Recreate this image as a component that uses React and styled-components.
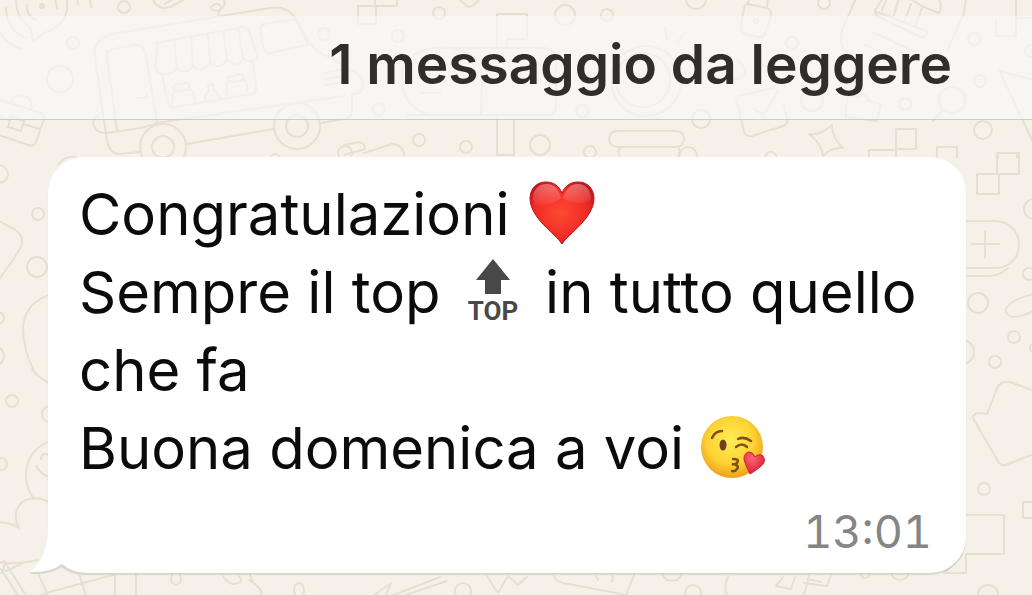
import React from "react";
import styled, { createGlobalStyle } from "styled-components";

const GlobalStyle = createGlobalStyle`
  * { box-sizing: border-box; }
  body {
    margin: 0;
    background: #f5f1e9;
    font-family: Inter, "Liberation Sans", sans-serif;
  }
`;

const Screen = styled.div`
  position: relative;
  min-height: 100vh;
  padding-top: 16px;
  overflow: hidden;
`;

const WallpaperArt = styled.svg`
  position: absolute;
  inset: 0;
  width: 100%;
  height: 100%;
  fill: none;
  stroke: #e8dfd4;
  stroke-width: 2;
  stroke-linejoin: round;
  stroke-linecap: round;
`;

const Header = styled.header`
  position: relative;
  padding: 16px 80px 23px;
  border-bottom: 1px solid #cfccc7;
  background: rgba(249, 249, 247, 0.64);
  text-align: right;
`;

const Title = styled.h1`
  margin: 0;
  font-size: 55px;
  line-height: 64px;
  font-weight: 600;
  color: #2f2e2d;
`;

const Conversation = styled.main`
  position: relative;
  padding: 37px 66px 22px 48px;
`;

const Bubble = styled.article`
  position: relative;
  padding: 18px 34px 11px 31px;
  border-radius: 36px;
  background: #fff;
  box-shadow: 0 2px 1px rgba(120, 115, 95, 0.2);
`;

const Tail = styled.svg`
  position: absolute;
  left: -18px;
  bottom: -2px;
  width: 68px;
  height: 72px;
`;

const Message = styled.p`
  position: relative;
  margin: 0;
  font-size: 58px;
  line-height: 78px;
  color: #0b0b0b;
`;

const Time = styled.time`
  display: block;
  margin-top: 15px;
  font-size: 45px;
  line-height: 60px;
  font-variant-numeric: tabular-nums;
  text-align: right;
  color: #858585;
`;

const EmojiArt = styled.svg`
  width: 72px;
  height: 66px;
  overflow: visible;
  vertical-align: -11px;
`;

const ringSpots = [
  [124, 7, 6], [73, 43, 6], [60, 79, 13], [439, 13, 6], [398, 36, 6], [565, 15, 10], [607, 15, 6],
  [379, 109, 6], [582, 111, 6], [419, 140, 6], [466, 147, 6], [540, 145, 10], [590, 152, 6],
  [792, 43, 6], [824, 3, 6], [974, 39, 6], [980, 81, 6], [701, 119, 9], [812, 100, 11], [905, 104, 6],
  [983, 130, 9], [688, 156, 9], [771, 158, 6], [345, 153, 7], [324, 34, 6], [696, -1, 10], [275, 159, 5],
  [38, 214, 6], [37, 267, 10], [-1, 174, 9], [-2, 318, 6], [-6, 356, 10], [12, 401, 6], [50, 414, 8],
  [1, 464, 6], [978, 303, 10], [1014, 337, 6], [995, 362, 6], [962, 352, 12], [1029, 274, 6],
  [1034, 209, 10], [984, 489, 6], [988, 595, 10], [1031, 51, 6], [1034, 348, 4],
];

const smallOvals = [
  [176, 578, 5, 7], [299, 590, 5, 7], [463, 591, 8, 8], [672, 571, 10, 10], [693, 593, 8, 8],
  [865, 572, 5, 6], [900, 571, 9, 9],
];

function Wallpaper() {
  return (
    <WallpaperArt viewBox="0 0 1032 595" preserveAspectRatio="xMinYMin slice" aria-hidden="true">
      {ringSpots.map(([x, y, r]) => (
        <circle key={`${x},${y}`} cx={x} cy={y} r={r} />
      ))}
      {smallOvals.map(([x, y, rx, ry]) => (
        <ellipse key={`${x},${y}`} cx={x} cy={y} rx={rx} ry={ry} />
      ))}

      {/* speech balloon with sound waves */}
      <path d="M17 -4C14 9 20 21 30 27L33 41L44 33C59 29 69 17 67 1M6 8C6 23 14 33 26 38M-2 28C3 40 11 46 22 49M27 5C26 12 30 18 36 20M55 -2L57 8M77 -2L78 4M90 -2L91 7" />
      <circle cx="42" cy="6" r="2" fill="#e9dfd3" />
      <path d="M153 -2C154 6 162 10 170 7L187 -2M165 4L176 -3M218 15L220 10C215 12 209 10 212 6C216 2 224 5 220 10C225 7 226 2 223 -2" />

      {/* food truck */}
      <path d="M140 152L119 154Q110 154 107 141L95 58Q92 40 112 34L270 8Q287 5 297 20L309 42Q318 55 330 57L346 68M108 133L140 128M140 128L156 124M155 123L344 96M187 144L274 129M320 123L344 119M106 51L117 131M107 58Q106 50 115 49L133 45Q144 43 146 56L157 123M137 98L143 98Q147 98 147 94" />
      <path d="M156 43L243 27Q247 27 249 31L257 54Q259 60 252 61Q246 62 243 58Q241 65 235 64Q229 62 227 59Q223 67 217 66Q211 65 210 62Q207 69 200 69Q195 69 193 66Q188 73 182 71Q178 70 177 68Q172 75 166 74Q156 75 155 66L158 44M174 40L177 68M191 37L193 66M208 34L210 62M223 31L227 59M238 28L243 58M162 75L168 104Q169 108 175 107L252 94Q257 92 256 87L253 62" />
      <path d="M172 106L173 94Q175 90 181 91L189 89Q193 89 194 95L195 103M176 91L173 87Q174 84 179 84L186 83Q190 83 189 89M206 100Q203 95 209 91L208 85L213 84L214 90Q219 93 219 98M227 96L226 84Q228 80 234 82L244 80Q248 80 247 92M229 81L228 77L242 74L244 80M262 24L295 19L308 45L269 53Q264 53 263 47L260 28Q260 25 266 24M324 73L343 69M325 79L343 76M326 85L344 82M98 116Q92 119 94 126Q97 134 108 133" />
      <circle cx="163" cy="147" r="23" />
      <circle cx="163" cy="147" r="11" />
      <circle cx="297" cy="126" r="23" />
      <circle cx="297" cy="126" r="11" />

      {/* briefcase */}
      <path d="M-4 99L39 112Q45 114 44 119L36 142Q34 147 28 145L-4 134M11 102C12 93 27 93 31 102L32 110M-3 116L9 120M23 124L40 129M11 117L24 121L21 131L8 127Z" />

      {/* mailbox */}
      <path d="M497 47L497 14L527 14L527 39L507 39L507 47M445 48L544 48Q556 49 556 62L556 106Q556 115 547 115L407 115M481 114L482 76C481 38 402 38 402 76C402 103 415 114 438 115M422 93L441 93M497 118L497 155L514 155L514 118M358 24V6H376V24ZM375 6V-3H397V6H358M458 -2L468 7Q471 8 480 -1M344 70C360 69 367 82 360 93L353 94M352 94V112Q351 118 344 119" />
      <path d="M344 145L359 142Q365 143 365 149L344 155M364 153L392 144Q404 145 404 156" />

      {/* camera lens */}
      <circle cx="646" cy="81" r="35" />
      <circle cx="643" cy="80" r="27" />
      <path d="M665 27L667 39M684 33L678 42M617 131H677Q684 132 684 139Q683 147 676 147H617Q609 146 609 139Q610 131 617 131M621 147Q616 153 620 157M678 147Q681 152 678 157" />

      {/* padlock, tick box, star, glass and pins */}
      <path d="M747 4L767 8Q772 10 771 16L765 34Q763 38 758 37L745 34Q740 32 741 26L744 8Q745 4 749 4M748 3L750 -3M767 7L768 -2M738 96L773 88L780 80M736 98L744 132Q746 137 752 136L783 126Q788 124 787 119L784 105M754 109L764 115L777 92M809 134Q820 136 832 125Q832 138 843 148Q831 147 823 156Q822 144 809 134M848 96Q858 98 862 95Q868 95 868 101L881 104L877 121L846 117Q845 108 848 96M943 110L933 121M732 80Q747 79 745 69L738 60" />
      <circle cx="756" cy="21" r="2" />
      <circle cx="952" cy="100" r="13" />
      <path d="M856 -2L843 28Q838 42 845 51M966 -2L964 13L948 49M884 -3L875 10Q875 16 881 18L923 38L928 32L875 11M887 -2L882 10M899 -2L893 18M911 4L904 23M922 8L915 27M910 -2C918 6 932 10 939 13Q943 5 938 -3M872 32L916 52M865 45L892 57M996 20V36H1016V18M1016 -3V18H1034M999 71L1034 80M1000 72L1032 140" />
      <path d="M896 129H916V149H896ZM869 158V150H896M896 149V158M937 158V147H957V158M998 158V153H1017V158M997 153H1019V174H997ZM977 174H999V194H977Z" />

      {/* right-hand game pad, leaf and notes */}
      <path d="M967 221H994C1010 221 1019 232 1019 245C1019 258 1009 268 995 268H966M1008 268Q1000 276 988 276H966M985 231V258M972 244H999M1034 294C1012 299 1001 308 1008 315Q1014 320 1034 311M1034 391L1013 383Q1002 379 997 388L987 414L978 413Q971 415 974 420L999 463Q1002 467 1008 464L1034 454M966 515H1004V554H966M1034 502H1023V518H1034M966 554V573H944L962 555" />

      {/* left-hand doodles */}
      <path d="M59 164Q65 155 76 157M-3 220L14 229Q25 236 21 247L13 260L-3 282M52 294Q25 302 23 327Q23 350 34 371M32 370Q41 380 52 384M52 441C27 447 18 477 34 499M41 459Q41 451 51 456M36 466Q43 477 51 477M-4 523C2 522 11 523 19 528C11 512 19 499 34 498Q43 498 50 503M-4 561Q10 566 38 560M4 561L29 600M1 569L21 600M6 571L23 563M38 573L49 598M79 574L87 598M42 594L113 575M115 575V598M136 575V598M4 563Q5 574 -3 574" />

      {/* doodles along the lower edge */}
      <path d="M222 575Q232 590 242 580L238 575M250 575L253 583M249 580Q264 588 262 600M370 598L391 583L385 597M388 597L440 577M400 597L447 581M486 575L498 593L508 576L518 585L527 577M554 576Q556 583 569 584L626 595L634 575M596 576L598 580M613 576L612 582M728 576Q722 590 729 600M783 577L776 586L791 589L795 577M809 576L803 600M804 583L827 586L831 575M807 579L821 582" />
    </WallpaperArt>
  );
}

function Heart() {
  return (
    <EmojiArt viewBox="0 0 72 66" role="img" aria-label="cuore rosso">
      <defs>
        <radialGradient id="heartFill" cx=".48" cy=".5" r=".65">
          <stop offset="0" stopColor="#ff4934" />
          <stop offset=".62" stopColor="#f02b25" />
          <stop offset="1" stopColor="#b80e16" />
        </radialGradient>
        <linearGradient id="heartShine" x2="0" y2="1">
          <stop offset="0" stopColor="#fff" stopOpacity=".35" />
          <stop offset="1" stopColor="#fff" stopOpacity="0" />
        </linearGradient>
      </defs>
      <path d="M36 64C29 53 5 39 4 19C4 8 11 2 20 2C28 2 33 6 36 13C39 6 44 2 52 2C61 2 68 8 68 19C67 39 43 53 36 64Z" fill="url(#heartFill)" stroke="#b9141a" />
      <path d="M7 19C7 8 14 4 21 4C28 4 33 9 35 18C29 24 15 26 8 27ZM37 18C40 8 46 4 52 4C59 4 65 9 65 20C57 25 44 24 37 18Z" fill="url(#heartShine)" />
    </EmojiArt>
  );
}

const TopWord = styled.text`
  font-family: Roboto, sans-serif;
  font-size: 26px;
  font-weight: 700;
  text-anchor: middle;
  fill: #484848;
`;

function TopArrow() {
  return (
    <EmojiArt viewBox="0 0 72 66" role="img" aria-label="top">
      <path d="M36 1L53 22H44V36H28V22H19Z" fill="#484848" />
      <TopWord x="36" y="62">TOP</TopWord>
    </EmojiArt>
  );
}

function Kiss() {
  return (
    <EmojiArt viewBox="0 0 72 66" role="img" aria-label="faccina che manda un bacio">
      <defs>
        <radialGradient id="face" cx=".48" cy=".4" r=".6">
          <stop offset="0" stopColor="#ffed58" />
          <stop offset=".62" stopColor="#fed334" />
          <stop offset="1" stopColor="#eba01c" />
        </radialGradient>
        <radialGradient id="kissHeart" cx=".4" cy=".3" r=".7">
          <stop offset="0" stopColor="#ff6675" />
          <stop offset="1" stopColor="#d91e37" />
        </radialGradient>
      </defs>
      <circle cx="32" cy="33" r="31" fill="url(#face)" />
      <ellipse cx="23" cy="31" rx="3.5" ry="5.5" fill="#714019" />
      <g fill="none" stroke="#805016" strokeWidth="2.5" strokeLinecap="round">
        <path d="M12 24Q15 17 22 17M38 25Q44 22 51 27M36 33Q42 28 47 33M33 45Q40 45 37 49Q35 51 32 50Q40 51 37 55Q35 58 32 57" />
      </g>
      <path d="M50 60Q45 50 44 45Q44 39 49 38Q53 38 55 43Q59 39 63 42Q67 48 60 53Q55 57 50 60Z" fill="url(#kissHeart)" stroke="#c82434" />
    </EmojiArt>
  );
}

export default function App() {
  return (
    <Screen>
      <GlobalStyle />
      <Wallpaper />
      <Header>
        <Title>1 messaggio da leggere</Title>
      </Header>
      <Conversation>
        <Bubble>
          <Tail viewBox="0 0 68 72" aria-hidden="true">
            <path d="M0 69L2 71Q20 72 32 64Q42 72 60 72V68L32 58Z" fill="#d9d8cd" />
            <path d="M18 0V24C18 47 12 58 0 69Q20 70 32 61Q42 70 60 70L68 0Z" fill="#fff" />
          </Tail>
          <Message>
            Congratulazioni <Heart />
            <br />
            Sempre il top <TopArrow /> in tutto quello che fa
            <br />
            Buona domenica a voi <Kiss />
          </Message>
          <Time dateTime="13:01">13:01</Time>
        </Bubble>
      </Conversation>
    </Screen>
  );
}
